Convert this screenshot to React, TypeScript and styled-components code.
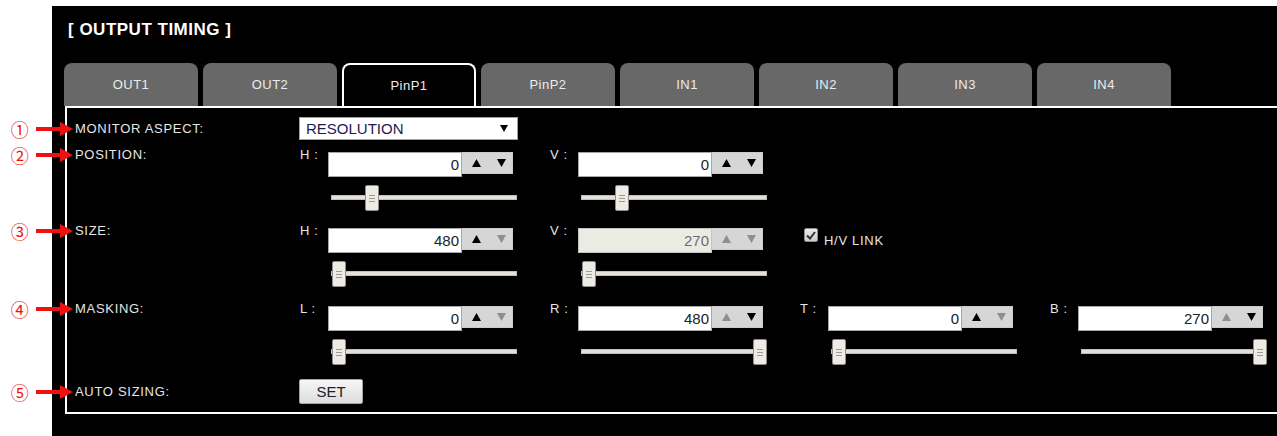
import React from 'react';
import styled, { createGlobalStyle } from 'styled-components';

const GlobalStyle = createGlobalStyle`
  html, body {
    margin: 0;
    padding: 0;
    background: #fff;
    overflow: hidden;
  }
  body {
    font-family: "Liberation Sans", Arial, sans-serif;
  }
`;

const Page = styled.div`
  width: 1277px;
  height: 436px;
  box-sizing: border-box;
  padding: 6px 0 0 52px;
`;

const Panel = styled.div`
  height: 430px;
  box-sizing: border-box;
  background: #000;
  padding: 15px 0 0 12px;
`;

const Title = styled.h1`
  margin: 0 0 0 4px;
  font-size: 17px;
  line-height: 18px;
  font-weight: bold;
  letter-spacing: 0.5px;
  color: #fff;
`;

const TabBar = styled.div`
  display: flex;
  gap: 5px;
  height: 43px;
  margin-top: 24px;
`;

const Tab = styled.div<{ $active?: boolean }>`
  width: 134px;
  box-sizing: border-box;
  display: flex;
  align-items: center;
  justify-content: center;
  border-radius: 8px 8px 0 0;
  background: ${({ $active }) => ($active ? '#000' : '#686868')};
  border: ${({ $active }) => ($active ? '2px solid #fff' : 'none')};
  border-bottom: none;
  font-size: 13px;
  letter-spacing: 0.5px;
  color: #ececec;
`;

const Box = styled.div`
  margin-left: 1px;
  border: 2px solid #fff;
  border-right: none;
  padding: 9px 0 8px 8px;
`;

const Row = styled.div<{ $gap?: number; $center?: boolean }>`
  display: grid;
  grid-template-columns: 224px 1fr;
  align-items: ${({ $center }) => ($center ? 'center' : 'start')};
  margin-top: ${({ $gap = 0 }) => `${$gap}px`};
`;

const RowLabel = styled.div<{ $center?: boolean }>`
  position: relative;
  margin-top: ${({ $center }) => ($center ? '0' : '-5px')};
  font-size: 13px;
  line-height: 16px;
  letter-spacing: 0.7px;
  color: #e6e6e6;
`;

const Marker = styled.div`
  position: absolute;
  left: -66px;
  top: 50%;
  transform: translateY(-50%);
  display: flex;
  align-items: center;
  gap: 5px;
  color: #ee1111;
`;

const MarkerNumber = styled.span`
  width: 22px;
  height: 18px;
  font-family: "Noto Sans CJK JP", "DejaVu Sans", sans-serif;
  font-size: 18px;
  line-height: 18px;
  text-align: center;
`;

const Controls = styled.div`
  display: flex;
`;

const Group = styled.div`
  width: 250px;
  display: grid;
  grid-template-columns: 29px 186px;
  align-items: start;
`;

const GroupLabel = styled.span`
  margin-top: -5px;
  padding-left: 1px;
  font-size: 13px;
  line-height: 16px;
  letter-spacing: 0.6px;
  color: #e6e6e6;
`;

const Spinner = styled.div`
  display: flex;
  align-items: flex-start;
`;

const NumberInput = styled.input`
  width: 134px;
  height: 25px;
  box-sizing: border-box;
  margin: 0;
  padding: 0 2px 0 0;
  border: 1px solid #a6a6a6;
  background: #fff;
  color: #222;
  font-family: "Liberation Sans", Arial, sans-serif;
  font-size: 15px;
  text-align: right;
  outline: none;

  &:disabled {
    background: #ebebe4;
    border-color: #c4c4c0;
    color: #6d6d6d;
  }
`;

const SpinBox = styled.div`
  width: 51px;
  height: 22px;
  box-sizing: border-box;
  display: flex;
  background: #d6d6d6;
  border: 1px solid #cacaca;
  border-left: none;
`;

const SpinButton = styled.div<{ $disabled?: boolean }>`
  width: 25px;
  padding-left: 3px;
  box-sizing: border-box;
  display: flex;
  align-items: center;
  justify-content: center;
  color: ${({ $disabled }) => ($disabled ? '#8e8e8e' : '#000')};
`;

const Slider = styled.div`
  position: relative;
  grid-column: 2;
  width: 186px;
  height: 26px;
  margin: 8px 0 0 3px;
`;

const Track = styled.div`
  height: 5px;
  margin-top: 10px;
  box-sizing: border-box;
  background: #e5e1d9;
  border: 1px solid #c2beb6;
`;

const Thumb = styled.div`
  position: absolute;
  top: 0;
  width: 14px;
  height: 26px;
  box-sizing: border-box;
  display: flex;
  flex-direction: column;
  align-items: center;
  justify-content: center;
  gap: 2px;
  background: #eeebe5;
  border: 1px solid #8e8e8e;
  border-radius: 2px;

  & > i {
    display: block;
    width: 6px;
    height: 1px;
    background: #9a9a9a;
  }
`;

const Select = styled.div`
  width: 219px;
  height: 23px;
  box-sizing: border-box;
  display: flex;
  align-items: center;
  justify-content: space-between;
  padding: 0 9px 0 6px;
  background: #fff;
  border: 1px solid #a0a0a0;
  font-size: 15px;
  color: #1c1c50;
`;

const LinkGroup = styled.div`
  width: 250px;
  display: flex;
  align-items: flex-start;
  padding-left: 5px;
`;

const CheckBox = styled.span`
  width: 14px;
  height: 14px;
  box-sizing: border-box;
  display: flex;
  align-items: center;
  justify-content: center;
  background: linear-gradient(#ececec, #cdcdcd);
  border: 1px solid #8c8c8c;
  border-radius: 2px;
`;

const CheckText = styled.span`
  margin: 5px 0 0 6px;
  font-size: 13px;
  line-height: 16px;
  letter-spacing: 0.7px;
  color: #e6e6e6;
`;

const Button = styled.button`
  width: 64px;
  height: 25px;
  margin: 0;
  padding: 0;
  background: linear-gradient(#f7f7f7, #dcdcdc);
  border: 1px solid #a2a2a2;
  border-radius: 2px;
  font-family: "Liberation Sans", Arial, sans-serif;
  font-size: 15px;
  color: #222;
`;

const Up = () => (
  <svg width="9" height="8" viewBox="0 0 9 8">
    <polygon points="4.5,0 9,8 0,8" fill="currentColor" />
  </svg>
);

const Down = () => (
  <svg width="9" height="8" viewBox="0 0 9 8">
    <polygon points="0,0 9,0 4.5,8" fill="currentColor" />
  </svg>
);

const Arrow = () => (
  <svg width="37" height="14" viewBox="0 0 37 14">
    <rect x="0" y="5" width="26" height="4" fill="currentColor" />
    <polygon points="24,0 37,7 24,14" fill="currentColor" />
  </svg>
);

const Label = ({ n, text, center }: { n: string; text: string; center?: boolean }) => (
  <RowLabel $center={center}>
    <Marker>
      <MarkerNumber>{n}</MarkerNumber>
      <Arrow />
    </Marker>
    {text}
  </RowLabel>
);

type FieldProps = {
  label: string;
  value: number;
  pos: number;
  upOff?: boolean;
  downOff?: boolean;
  disabled?: boolean;
};

const Field = ({ label, value, pos, upOff, downOff, disabled }: FieldProps) => (
  <Group>
    <GroupLabel>{label}</GroupLabel>
    <Spinner>
      <NumberInput readOnly disabled={disabled} value={value} />
      <SpinBox>
        <SpinButton $disabled={upOff}>
          <Up />
        </SpinButton>
        <SpinButton $disabled={downOff}>
          <Down />
        </SpinButton>
      </SpinBox>
    </Spinner>
    <Slider>
      <Track />
      <Thumb style={{ left: `${Math.round(pos * 172)}px` }}>
        <i />
        <i />
        <i />
      </Thumb>
    </Slider>
  </Group>
);

const tabs = ['OUT1', 'OUT2', 'PinP1', 'PinP2', 'IN1', 'IN2', 'IN3', 'IN4'];

export default function App() {
  return (
    <>
      <GlobalStyle />
      <Page>
        <Panel>
          <Title>[ OUTPUT TIMING ]</Title>
          <TabBar>
            {tabs.map((t) => (
              <Tab key={t} $active={t === 'PinP1'}>
                {t}
              </Tab>
            ))}
          </TabBar>
          <Box>
            <Row $center>
              <Label n="①" text="MONITOR ASPECT:" center />
              <Controls>
                <Select>
                  <span>RESOLUTION</span>
                  <svg width="8" height="7" viewBox="0 0 8 7">
                    <polygon points="0,0 8,0 4,7" fill="#000" />
                  </svg>
                </Select>
              </Controls>
            </Row>
            <Row $gap={12}>
              <Label n="②" text="POSITION:" />
              <Controls>
                <Field label="H :" value={0} pos={0.2} />
                <Field label="V :" value={0} pos={0.2} />
              </Controls>
            </Row>
            <Row $gap={17}>
              <Label n="③" text="SIZE:" />
              <Controls>
                <Field label="H :" value={480} pos={0.005} downOff />
                <Field label="V :" value={270} pos={0.005} upOff downOff disabled />
                <LinkGroup>
                  <CheckBox>
                    <svg width="10" height="9" viewBox="0 0 10 9">
                      <path d="M1 4.5 L4 7.5 L9 1" fill="none" stroke="#333" strokeWidth="2" />
                    </svg>
                  </CheckBox>
                  <CheckText>H/V LINK</CheckText>
                </LinkGroup>
              </Controls>
            </Row>
            <Row $gap={19}>
              <Label n="④" text="MASKING:" />
              <Controls>
                <Field label="L :" value={0} pos={0.005} downOff />
                <Field label="R :" value={480} pos={1} upOff />
                <Field label="T :" value={0} pos={0.005} downOff />
                <Field label="B :" value={270} pos={1} upOff />
              </Controls>
            </Row>
            <Row $gap={14} $center>
              <Label n="⑤" text="AUTO SIZING:" center />
              <Controls>
                <Button>SET</Button>
              </Controls>
            </Row>
          </Box>
        </Panel>
      </Page>
    </>
  );
}
